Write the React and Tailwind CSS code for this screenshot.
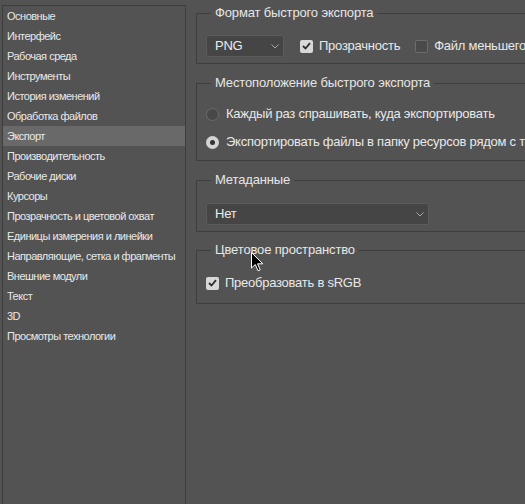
import React from "react";

const listItems = [
  "Основные",
  "Интерфейс",
  "Рабочая среда",
  "Инструменты",
  "История изменений",
  "Обработка файлов",
  "Экспорт",
  "Производительность",
  "Рабочие диски",
  "Курсоры",
  "Прозрачность и цветовой охват",
  "Единицы измерения и линейки",
  "Направляющие, сетка и фрагменты",
  "Внешние модули",
  "Текст",
  "3D",
  "Просмотры технологии",
];

const font = { fontFamily: '"Liberation Sans", Arial, sans-serif' };

function Chevron() {
  return (
    <svg width="8" height="5" viewBox="0 0 8 5" className="shrink-0">
      <path d="M0.5 0.5 L4 4 L7.5 0.5" fill="none" stroke="#a8a8a8" strokeWidth="1" />
    </svg>
  );
}

function Select({ value, className }) {
  return (
    <div
      className={
        "flex items-center justify-between h-[22px] rounded-[3px] bg-[#454545] border border-[#5b5b5b] pl-[8px] pr-[4px] text-[13px] tracking-[-0.25px] text-[#ececec] " +
        className
      }
    >
      <span>{value}</span>
      <Chevron />
    </div>
  );
}

function Checkbox({ checked }) {
  if (checked) {
    return (
      <div className="w-[13px] h-[13px] rounded-[2px] bg-[#d8d8d8] flex items-center justify-center shrink-0">
        <svg width="9" height="8" viewBox="0 0 9 8">
          <path d="M1 4 L3.5 6.5 L8 1.2" fill="none" stroke="#2e2e2e" strokeWidth="1.8" />
        </svg>
      </div>
    );
  }
  return <div className="w-[13px] h-[13px] rounded-[2px] bg-[#4a4a4a] border border-[#6c6c6c] shrink-0" />;
}

function Radio({ checked }) {
  if (checked) {
    return (
      <div className="w-[13px] h-[13px] rounded-full bg-[#d4d4d4] flex items-center justify-center shrink-0">
        <div className="w-[5px] h-[5px] rounded-full bg-[#333333]" />
      </div>
    );
  }
  return <div className="w-[13px] h-[13px] rounded-full bg-[#484848] border border-[#6c6c6c] shrink-0" />;
}

function Group({ title, className, children }) {
  return (
    <fieldset className={"w-[420px] border border-[#3e3e3e] " + className}>
      <legend className="ml-[5px] px-[4px] text-[13px] tracking-[-0.15px] leading-[16px] text-[#e6e6e6]">{title}</legend>
      {children}
    </fieldset>
  );
}

export default function App() {
  return (
    <div
      className="relative w-[525px] h-[504px] overflow-hidden bg-[#535353] flex pt-[5px] pl-[2px] text-[#e8e8e8]"
      style={font}
    >
      {/* Left list */}
      <div className="w-[184px] h-[600px] shrink-0 border border-[#3e3e3e] flex flex-col">
        {listItems.map((it) => (
          <div
            key={it}
            className={
              "h-[20px] flex items-center pl-[4px] text-[11px] tracking-[-0.5px] whitespace-nowrap " +
              (it === "Экспорт" ? "bg-[#696969]" : "")
            }
          >
            {it}
          </div>
        ))}
      </div>

      {/* Right panel */}
      <div className="flex-1 flex flex-col pl-[10px]">
        <Group title="Формат быстрого экспорта" className="pt-[14px] pb-[6px] pl-[9px]">
          <div className="flex items-center text-[13px] tracking-[-0.25px] whitespace-nowrap">
            <Select value="PNG" className="w-[78px]" />
            <div className="ml-[16px]">
              <Checkbox checked />
            </div>
            <span className="ml-[6px]">Прозрачность</span>
            <div className="ml-[15px]">
              <Checkbox />
            </div>
            <span className="ml-[6px]">Файл меньшего размера (8 бит)</span>
          </div>
        </Group>

        <Group title="Местоположение быстрого экспорта" className="mt-[11px] pt-[13px] pb-[8px] pl-[9px]">
          <div className="flex flex-col gap-[8px] text-[13px] tracking-[-0.25px] whitespace-nowrap">
            <div className="h-[20px] flex items-center gap-[7px]">
              <Radio />
              <span>Каждый раз спрашивать, куда экспортировать</span>
            </div>
            <div className="h-[20px] flex items-center gap-[7px]">
              <Radio checked />
              <span>Экспортировать файлы в папку ресурсов рядом с текущим документом</span>
            </div>
          </div>
        </Group>

        <Group title="Метаданные" className="mt-[11px] pt-[15px] pb-[6px] pl-[9px]">
          <Select value="Нет" className="w-[223px]" />
        </Group>

        <Group title="Цветовое пространство" className="mt-[10px] pt-[15px] pb-[10px] pl-[9px]">
          <div className="h-[20px] flex items-center gap-[6px] text-[13px] tracking-[-0.25px] whitespace-nowrap">
            <Checkbox checked />
            <span>Преобразовать в sRGB</span>
          </div>
        </Group>
      </div>

      {/* Mouse cursor */}
      <svg className="absolute left-[251px] top-[252px]" width="13" height="20" viewBox="0 0 13 20">
        <path d="M0.5 0.5 L0.5 16 L4.3 12.5 L7 18.8 L9.2 17.8 L6.6 11.8 L11.8 11.8 Z" fill="#000" stroke="#fff" strokeWidth="1" />
      </svg>
    </div>
  );
}
